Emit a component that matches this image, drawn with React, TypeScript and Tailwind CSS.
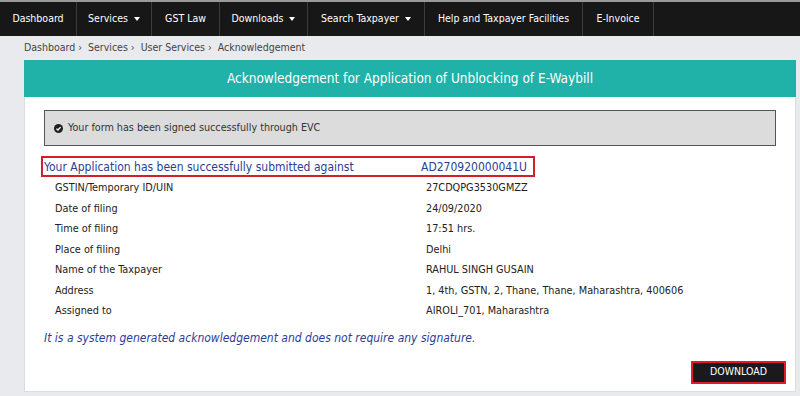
import React from 'react';

const navItems = [
  { label: 'Dashboard', w: 'w-[77px]' },
  { label: 'Services', caret: true, w: 'w-[75px]' },
  { label: 'GST Law', w: 'w-[68px]' },
  { label: 'Downloads', caret: true, w: 'w-[88px]' },
  { label: 'Search Taxpayer', caret: true, w: 'w-[117px]' },
  { label: 'Help and Taxpayer Facilities', w: 'w-[158px]' },
  { label: 'E-Invoice', w: 'w-[71px]' },
];

const rows = [
  ['GSTIN/Temporary ID/UIN', '27CDQPG3530GMZZ'],
  ['Date of filing', '24/09/2020'],
  ['Time of filing', '17:51 hrs.'],
  ['Place of filing', 'Delhi'],
  ['Name of the Taxpayer', 'RAHUL SINGH GUSAIN'],
  ['Address', '1, 4th, GSTN, 2, Thane, Thane, Maharashtra, 400606'],
  ['Assigned to', 'AIROLI_701, Maharashtra'],
];

const Caret = () => (
  <span className="ml-[6px] inline-block h-0 w-0 border-x-[3px] border-t-[4px] border-x-transparent border-t-white align-middle" />
);

const App = () => {
  return (
    <div className="h-[396px] w-[800px] overflow-hidden bg-[#e9eaee] font-['DejaVu_Sans_Condensed','DejaVu_Sans',sans-serif] text-[#333]">
      <nav className="flex h-[36px] border-t-[2px] border-[#9a9a9a] bg-[#171717]">
        {navItems.map((item) => (
          <div
            key={item.label}
            className={`flex ${item.w} items-center justify-center border-r border-[#3c3c3c] text-[10.5px] text-white`}
          >
            {item.label}
            {item.caret && <Caret />}
          </div>
        ))}
      </nav>

      <div className="flex h-[24px] items-center pl-[24px] text-[10.5px] text-[#444]">
        Dashboard › <span className="ml-[6px]">Services ›</span>
        <span className="ml-[6px]">User Services ›</span>
        <span className="ml-[6px]">Acknowledgement</span>
      </div>

      <div className="ml-[24px] mr-[4px]">
        <div className="flex h-[37px] items-center justify-center bg-[#20b1a8] text-[13.5px] text-white">
          Acknowledgement for Application of Unblocking of E-Waybill
        </div>
        <div className="h-[295px] border border-t-0 border-[#dcdcdc] bg-white px-[19px] pt-[13px]">
          <div className="flex h-[36px] items-center border border-[#555] bg-[#dcdcdc] px-[9px] text-[10.7px] text-[#333]">
            <span className="mr-[5px] flex h-[9px] w-[9px] items-center justify-center rounded-full bg-[#222]">
              <svg viewBox="0 0 10 10" className="h-[7px] w-[7px]">
                <path d="M2 5.2 L4.2 7.2 L8 3" stroke="white" strokeWidth="1.8" fill="none" />
              </svg>
            </span>
            Your form has been signed successfully through EVC
          </div>

          <div className="ml-[-3px] mt-[10px] flex h-[21px] w-[494px] items-center border-2 border-[#d21f2c] pl-[1px] text-[12px] text-[#2e3d94]">
            <span className="w-[377px] shrink-0">Your Application has been successfully submitted against</span>
            <span className="shrink-0">AD270920000041U</span>
          </div>

          <div className="mt-[1px]">
            {rows.map(([label, value]) => (
              <div key={label} className="flex h-[20.5px] items-center text-[10.8px] text-[#222]">
                <span className="w-[382px] shrink-0 pl-[11px]">{label}</span>
                <span>{value}</span>
              </div>
            ))}
          </div>

          <p className="mt-[7px] text-[12px] italic text-[#2e3d94]">
            It is a system generated acknowledgement and does not require any signature.
          </p>

          <div className="-mr-[10px] mt-[14px] flex justify-end">
            <button className="h-[23px] w-[95px] border-2 border-[#e01c2c] bg-[#1a1a1a] text-[10.5px] text-white">
              DOWNLOAD
            </button>
          </div>
        </div>
      </div>
    </div>
  );
};

export default App;
